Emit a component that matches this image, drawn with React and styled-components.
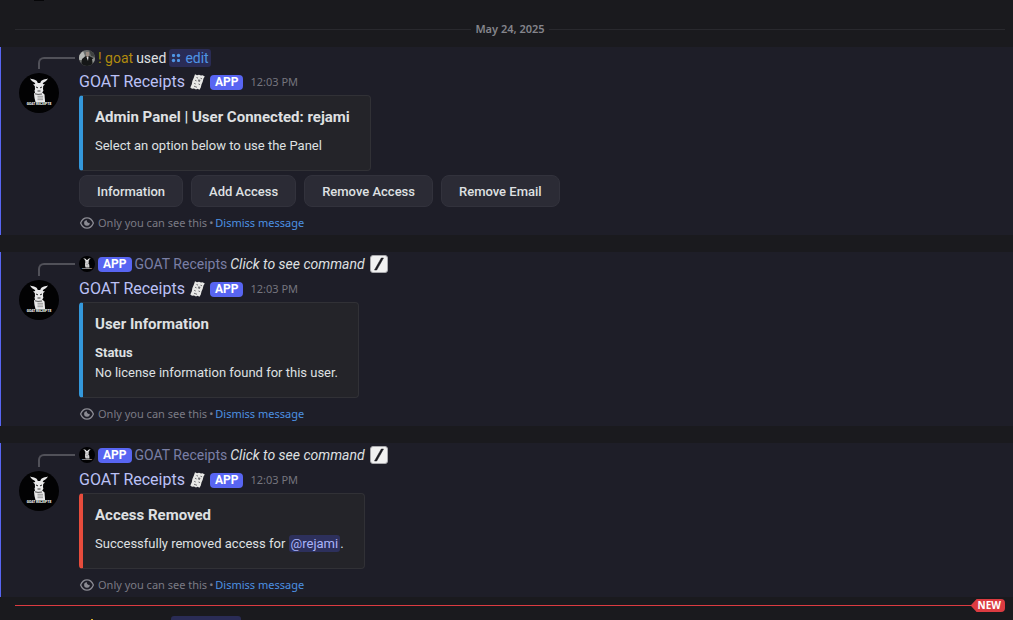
import React from "react";
import styled, { createGlobalStyle } from "styled-components";

const GlobalStyle = createGlobalStyle`
  *, *::before, *::after { box-sizing: border-box; }
  body {
    margin: 0;
    background: #1a1a1e;
    color: #dfe0e2;
    font: 400 13px/18px Roboto, "Liberation Sans", sans-serif;
  }
`;

const Page = styled.main`
  display: flex;
  flex-direction: column;
  overflow: hidden;
`;

const PreviousEdge = styled.div`
  display: flex;
  align-items: flex-end;
  height: 1px;
  padding-left: 34px;
  &::before {
    content: "";
    width: 10px;
    height: 1px;
    background: #060608;
  }
`;

const DateDivider = styled.div`
  display: flex;
  align-items: center;
  gap: 4px;
  margin: 19px 8px 9px 15px;
  color: #85858c;
  font: 600 11px/18px "Noto Sans", sans-serif;
  &::before,
  &::after {
    content: "";
    flex: 1;
    height: 1px;
    background: #29292e;
  }
`;

const Feed = styled.div`
  display: flex;
  flex-direction: column;
  gap: 17px;
`;

const Message = styled.article`
  display: grid;
  grid-template-columns: 40px minmax(0, 1fr);
  column-gap: 20px;
  padding: 2px 16px 4px 18px;
  border-left: 1px solid #5865f2;
  background: #1e1e28;
`;

const SpineCell = styled.div`
  display: flex;
  align-items: flex-end;
  padding: 0 0 2px 19px;
`;

const Spine = styled.div`
  flex: none;
  width: 37px;
  height: ${(p) => (p.$tall ? 13 : 12)}px;
  border: solid #515159;
  border-width: 2px 0 0 2px;
  border-top-left-radius: 6px;
`;

const Reply = styled.div`
  display: flex;
  align-items: center;
  gap: 3px;
  height: ${(p) => (p.$tall ? 20 : 18)}px;
  margin-bottom: 4px;
  font-size: 14px;
  white-space: nowrap;
`;

const ReplyUser = styled.span`
  color: ${(p) => p.$color};
`;

const CommandPrompt = styled.button`
  display: flex;
  align-items: center;
  gap: 5px;
  padding: 0;
  border: 0;
  background: none;
  color: #dfe0e2;
  font: italic 400 14px/18px Roboto, "Liberation Sans", sans-serif;
`;

const CommandChip = styled.button`
  display: flex;
  align-items: center;
  gap: 4px;
  height: 18px;
  padding: 0 2px;
  border: 0;
  border-radius: 3px;
  background: #2a2c56;
  color: #4f96e6;
  font: 400 14px/18px Roboto, "Liberation Sans", sans-serif;
`;

const AvatarCell = styled.div`
  padding-top: 2px;
`;

const Header = styled.header`
  display: flex;
  align-items: center;
  gap: 5px;
  height: 22px;
  margin-bottom: 2px;
`;

const Author = styled.h2`
  margin: 0;
  color: #bbc1f6;
  font-size: 16px;
  font-weight: 400;
  line-height: 22px;
`;

const AppTag = styled.span`
  height: 15px;
  padding: 0 5px;
  border-radius: 4px;
  background: #5865f2;
  color: #fff;
  font-size: 12px;
  font-weight: 700;
  line-height: 15px;
`;

const Time = styled.time`
  padding-left: 2px;
  color: #75757e;
  font: 400 11px/18px "Noto Sans", sans-serif;
`;

const Embed = styled.section`
  width: fit-content;
  padding: 10px 20px 15px 12px;
  border: 1px solid #313136;
  border-left: 4px solid ${(p) => p.$accent};
  border-radius: 4px;
  background: #242429;
`;

const EmbedTitle = styled.h3`
  margin: 0 0 9px;
  font-size: 15px;
  font-weight: 700;
  line-height: 22px;
`;

const FieldName = styled.h4`
  margin: 0 0 2px;
  font-size: 13px;
  font-weight: 700;
`;

const EmbedText = styled.p`
  margin: 0;
`;

const Mention = styled.a`
  padding: 1px 2px;
  border-radius: 3px;
  background: #2d305c;
  color: #aab4fa;
  text-decoration: none;
`;

const Actions = styled.div`
  display: flex;
  flex-wrap: wrap;
  gap: 8px;
  margin-top: 4px;
`;

const Action = styled.button`
  height: 32px;
  padding: 1px 17px 0;
  border: 1px solid #32323c;
  border-radius: 8px;
  background: #2b2b35;
  color: #dfe0e2;
  font: 500 13px/18px Roboto, "Liberation Sans", sans-serif;
`;

const Footer = styled.footer`
  display: flex;
  align-items: center;
  height: 16px;
  margin-top: 8px;
  color: #7b7b84;
  font: 400 11px/16px "Noto Sans", sans-serif;
`;

const Visibility = styled.span`
  padding: 0 2px 0 3px;
`;

const Dismiss = styled.a`
  padding-left: 2px;
  color: #4c91e2;
  text-decoration: none;
`;

const NewDivider = styled.div`
  display: flex;
  align-items: center;
  margin: 2px 8px 0 15px;
  &::before {
    content: "";
    flex: 1;
    height: 1px;
    background: #dc3b41;
  }
`;

const NewTag = styled.span`
  height: 13px;
  padding: 0 4px 0 7px;
  border-radius: 0 4px 4px 0;
  background: #dc3b41;
  clip-path: polygon(6px 0, 100% 0, 100% 100%, 6px 100%, 0 50%);
  color: #fff;
  font: 700 10px/13px "Noto Sans", sans-serif;
`;

const NextEdge = styled.div`
  display: flex;
  align-items: flex-end;
  justify-content: space-between;
  width: 150px;
  height: 8px;
  margin-left: 91px;
`;

const NextSpeck = styled.span`
  width: 2px;
  height: 1px;
  background: #d9ae2b;
`;

const NextChip = styled.span`
  width: 70px;
  height: 4px;
  border-radius: 3px 3px 0 0;
  background: #2a2c56;
`;

function GoatAvatar({ size }) {
  return (
    <svg width={size} height={size} viewBox="0 0 40 40" display="block" role="img" aria-label="GOAT Receipts">
      <circle cx="20" cy="20" r="20" fill="#020203" />
      <g fill="#e9e9ea">
        <path d="M11 5.500c2.200.8 4.300.6 6.200 2 1 .8 1.300 1.600 1.500 2.500h2.600c.2-.9.5-1.700 1.500-2.500 1.900-1.400 4-1.200 6.200-2-1.200 2.600-3.200 3.200-4.700 4.300l-.6 1.200 2.300.6-1.800 1.400-.2 3 .4 1.700-1.600 2.300h-5.600L15.600 17.700l.4-1.700-.2-3-1.800-1.400 2.300-.6-.6-1.200C14.200 8.700 12.200 8.100 11 5.500z" />
        <path d="M15 20.500l2-1.500 6 .3 2.500 2.200.6 7.500h-9.600l-1-4z" />
        <path d="M15.600 17.500h2l.5 3.500-1.800 1z" />
      </g>
      <g stroke="#111" fill="none">
        <path d="M17 14l2 .9M23 14l-2 .9" strokeWidth=".9" />
        <path d="M18.500 18h3" strokeWidth=".8" />
        <path d="M16 20.800l3 .6 4-.4" strokeWidth=".7" />
        <path d="M18.500 23.300h5.500M18.500 25h5.500M18.500 26.700h5.500" stroke="#888" strokeWidth=".8" />
      </g>
      <text x="20" y="32" textAnchor="middle" fill="#f2f2f2" fontFamily="Roboto, sans-serif" fontWeight="900" fontSize="3.300">
        GOAT RECEIPTS
      </text>
    </svg>
  );
}

function UserAvatar() {
  return (
    <svg width="16" height="16" viewBox="0 0 16 16" aria-hidden="true">
      <defs>
        <clipPath id="user-avatar">
          <circle cx="8" cy="8" r="8" />
        </clipPath>
      </defs>
      <g clipPath="url(#user-avatar)">
        <path fill="#6d706e" d="M0 0h16v16H0z" />
        <path fill="#b5b8b5" d="M0 5l4-4 2 5-3 4H0z" />
        <path fill="#3e4241" d="M10 0h6v7l-4-1z" />
        <path fill="#151717" d="M2 16l1-7 4-3h3l4 2 2 8z" />
        <path fill="#9a8c82" d="M7 2h3v4l-1 1H8L7 6z" />
        <path fill="#dadada" d="M7.500 7h2L9 11z" />
        <path fill="#929592" d="M13 9l3-1v7l-2 1z" />
      </g>
    </svg>
  );
}

function ReceiptIcon() {
  return (
    <svg width="15" height="16" viewBox="0 0 15 16" aria-hidden="true">
      <path fill="#e8e8e6" d="M5 .3l2 .9 2-.5 2 .9 1.600-.3 2.200 1.200-1.300 2-.8 3.200-1.200 2.700-.7 3-1.300 2.300-2-1-1.500.8-2-1.100-2 .3L.3 13.400l1.500-3.100.6-3.300 1.400-3.200z" />
      <path fill="none" stroke="#4b4b50" strokeWidth=".8" d="M6.500 3.500l1.500.6M10.500 4.200l1.500.6M5 6.200l1.500.7M4.200 9.300l1.500.7M8.500 10l1.500.6M4 12.200l3 1.100" />
      <path fill="#6f6f73" d="M8.500 5.200l2 .9-.7 1.900-2-.8z" />
    </svg>
  );
}

function SlashIcon() {
  return (
    <svg width="18" height="18" viewBox="0 0 18 18" aria-hidden="true">
      <rect x=".5" y=".5" width="17" height="17" rx="2.500" fill="#f1f1f1" stroke="#a9a9ad" />
      <path d="M11.300 3h2.200L6.700 15H4.500z" fill="#1b1b20" stroke="#1b1b20" strokeWidth=".5" />
    </svg>
  );
}

function CommandIcon() {
  return (
    <svg width="10" height="10" viewBox="0 0 10 10" fill="currentColor" aria-hidden="true">
      <rect x="1" y="1" width="3" height="3" rx="1" />
      <circle cx="7.500" cy="2.500" r="1.700" />
      <circle cx="2.500" cy="7.500" r="1.700" />
      <rect x="6" y="6" width="3" height="3" rx="1" />
    </svg>
  );
}

function EyeIcon() {
  return (
    <svg width="16" height="16" viewBox="0 0 16 16" fill="none" aria-hidden="true">
      <path d="M1.600 8C3 4.700 5.300 2.900 8 2.900S13 4.700 14.400 8C13 11.300 10.700 13.100 8 13.100S3 11.300 1.600 8z" stroke="#8b8b93" strokeWidth="1.300" />
      <path d="M8 5.200a2 2 0 0 0 2.700 2.500A2.800 2.800 0 1 1 8 5.200z" fill="#8b8b93" />
    </svg>
  );
}

function BotReply() {
  return (
    <Reply $tall>
      <GoatAvatar size={16} />
      <AppTag>APP</AppTag>
      <ReplyUser $color="#7a7fa5">GOAT Receipts</ReplyUser>
      <CommandPrompt type="button">
        Click to see command
        <SlashIcon />
      </CommandPrompt>
    </Reply>
  );
}

function UserReply() {
  return (
    <Reply>
      <UserAvatar />
      <ReplyUser $color="#b08a0e">! goat</ReplyUser>
      <span>used</span>
      <CommandChip type="button">
        <CommandIcon />
        edit
      </CommandChip>
    </Reply>
  );
}

function BotMessage({ accent, title, fromUser, actions, children }) {
  return (
    <Message>
      <SpineCell>
        <Spine $tall={!fromUser} />
      </SpineCell>
      {fromUser ? <UserReply /> : <BotReply />}
      <AvatarCell>
        <GoatAvatar size={40} />
      </AvatarCell>
      <div>
        <Header>
          <Author>GOAT Receipts</Author>
          <ReceiptIcon />
          <AppTag>APP</AppTag>
          <Time dateTime="2025-05-24T12:03">12:03 PM</Time>
        </Header>
        <Embed $accent={accent}>
          <EmbedTitle>{title}</EmbedTitle>
          {children}
        </Embed>
        {actions && (
          <Actions>
            {actions.map((label) => (
              <Action key={label} type="button">{label}</Action>
            ))}
          </Actions>
        )}
        <Footer>
          <EyeIcon />
          <Visibility>Only you can see this</Visibility>
          <span>•</span>
          <Dismiss href="#dismiss">Dismiss message</Dismiss>
        </Footer>
      </div>
    </Message>
  );
}

export default function App() {
  return (
    <>
      <GlobalStyle />
      <Page>
        <PreviousEdge />
        <DateDivider>May 24, 2025</DateDivider>
        <Feed>
          <BotMessage
            accent="#3498db"
            title="Admin Panel | User Connected: rejami"
            fromUser
            actions={["Information", "Add Access", "Remove Access", "Remove Email"]}
          >
            <EmbedText>Select an option below to use the Panel</EmbedText>
          </BotMessage>
          <BotMessage accent="#3498db" title="User Information">
            <FieldName>Status</FieldName>
            <EmbedText>No license information found for this user.</EmbedText>
          </BotMessage>
          <BotMessage accent="#e74c3c" title="Access Removed">
            <EmbedText>
              Successfully removed access for <Mention href="#rejami">@rejami</Mention>.
            </EmbedText>
          </BotMessage>
        </Feed>
        <NewDivider>
          <NewTag>NEW</NewTag>
        </NewDivider>
        <NextEdge>
          <NextSpeck />
          <NextChip />
        </NextEdge>
      </Page>
    </>
  );
}
